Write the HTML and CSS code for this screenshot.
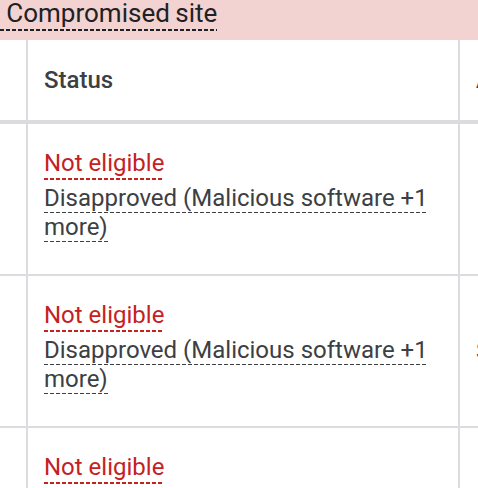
FILE: index.html
```html
<!DOCTYPE html>
<html lang="en">
<head>
<meta charset="utf-8">
<title>Policy table</title>
<link rel="stylesheet" href="styles.css">
</head>
<body>
<div class="banner"><span class="issue">. Compromised site</span></div>
<div class="table">
  <div class="row head">
    <div class="cell c0"></div>
    <div class="cell c1"><span class="th">Status</span></div>
    <div class="cell c2"><span class="th">Ad type</span></div>
  </div>
  <div class="row">
    <div class="cell c0"></div>
    <div class="cell c1 top">
      <span class="status">Not eligible</span>
      <p class="reason"><span class="dash">Disapproved (Malicious software +1 more)</span></p>
    </div>
    <div class="cell c2"></div>
  </div>
  <div class="row">
    <div class="cell c0"></div>
    <div class="cell c1 top">
      <span class="status">Not eligible</span>
      <p class="reason"><span class="dash">Disapproved (Malicious software +1 more)</span></p>
    </div>
    <div class="cell c2"><span class="td">Search ad</span></div>
  </div>
  <div class="row">
    <div class="cell c0"></div>
    <div class="cell c1 top">
      <span class="status">Not eligible</span>
      <p class="reason"><span class="dash">Disapproved (Malicious software +1 more)</span></p>
    </div>
    <div class="cell c2"></div>
  </div>
</div>
</body>
</html>
```
FILE: styles.css
```css
html, body {
  margin: 0;
  padding: 0;
  background: #ffffff;
  overflow: hidden;
}

body {
  width: 478px;
  height: 488px;
  font-family: Roboto, "Noto Sans", "Liberation Sans", sans-serif;
  font-size: 24px;
  color: #3c4043;
}

.banner {
  height: 40px;
  background: #f3d3d1;
  overflow: hidden;
  white-space: nowrap;
}

.issue {
  display: inline-block;
  margin-left: -6px;
  font-size: 26px;
  line-height: 17px;
  word-spacing: -1px;
  color: #202124;
  padding-bottom: 9px;
  background-image: repeating-linear-gradient(to right, #202124 0 4px, transparent 4px 6px);
  background-size: 100% 2px;
  background-repeat: no-repeat;
  background-position: left bottom;
}

.table {
  width: 478px;
}

.row {
  display: flex;
  height: 152px;
  box-sizing: border-box;
  border-bottom: 2px solid #dadce0;
}

.row.head {
  height: 84px;
  border-bottom-width: 4px;
}

.cell {
  box-sizing: border-box;
  display: flex;
  align-items: center;
  overflow: hidden;
  white-space: nowrap;
}

.c0 {
  width: 28px;
  flex: none;
  border-right: 2px solid #dadce0;
}

.c1 {
  width: 432px;
  flex: none;
  border-right: 2px solid #dadce0;
  padding: 0 16px;
}

.c2 {
  flex: 1;
  padding-left: 16px;
}

.c1.top {
  flex-direction: column;
  align-items: flex-start;
  justify-content: flex-start;
  padding-top: 25px;
  white-space: normal;
}

.th {
  font-weight: 500;
  font-size: 24px;
  line-height: 28px;
  color: #3c4043;
}

.td {
  font-size: 24px;
  line-height: 28px;
  color: #3c4043;
}

.status {
  display: inline-block;
  line-height: 28px;
  color: #c5221f;
  padding-bottom: 3px;
  background-image: repeating-linear-gradient(to right, #c5221f 0 4px, transparent 4px 6px);
  background-size: 100% 2px;
  background-repeat: no-repeat;
  background-position: left bottom;
}

.reason {
  margin: 4px 0 0;
  line-height: 29px;
}

.dash {
  padding-bottom: 1px;
  background-image: repeating-linear-gradient(to right, #3c4043 0 4px, transparent 4px 6px);
  background-size: 100% 1.5px;
  background-repeat: repeat-x;
  background-position: left bottom;
}
```
